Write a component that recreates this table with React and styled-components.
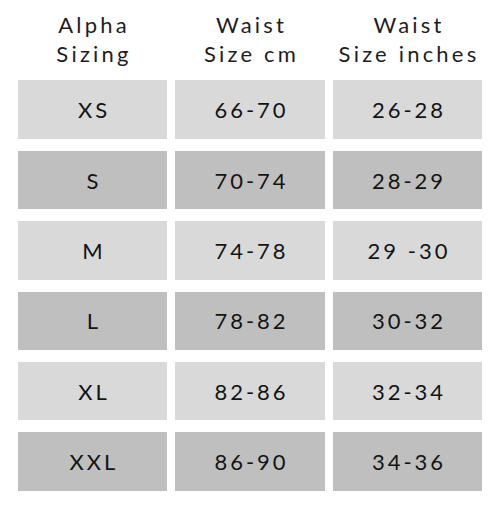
import React from "react";
import styled, { createGlobalStyle } from "styled-components";

const GlobalStyle = createGlobalStyle`
  body {
    margin: 0;
    background: #ffffff;
    font-family: Lato, "Open Sans", sans-serif;
  }
`;

const Table = styled.div`
  display: grid;
  grid-template-columns: 149px 150px 149px;
  grid-auto-rows: 58.5px;
  column-gap: 8px;
  row-gap: 11.9px;
  padding: 10px 18px 0;
`;

const Head = styled.div`
  display: flex;
  flex-direction: column;
  align-items: center;
  justify-content: center;
  padding-left: 3px;
  font-size: 22px;
  line-height: 29px;
  letter-spacing: 3.2px;
  color: #1e1e1e;
  white-space: nowrap;
`;

const Cell = styled.div`
  display: flex;
  align-items: center;
  justify-content: center;
  padding-left: 3px;
  background: ${(p) => (p.$dark ? "#bfbfbf" : "#d9d9d9")};
  font-size: 22px;
  letter-spacing: 3px;
  color: #141414;
`;

const headers = [
  ["Alpha", "Sizing"],
  ["Waist", "Size cm"],
  ["Waist", "Size inches"],
];

const rows = [
  ["XS", "66-70", "26-28"],
  ["S", "70-74", "28-29"],
  ["M", "74-78", "29 -30"],
  ["L", "78-82", "30-32"],
  ["XL", "82-86", "32-34"],
  ["XXL", "86-90", "34-36"],
];

export default function App() {
  return (
    <>
      <GlobalStyle />
      <Table>
        {headers.map((h, i) => (
          <Head key={i}>
            <span>{h[0]}</span>
            <span>{h[1]}</span>
          </Head>
        ))}
        {rows.map((r, i) =>
          r.map((c, j) => (
            <Cell key={i + "-" + j} $dark={i % 2 === 1}>
              {c}
            </Cell>
          ))
        )}
      </Table>
    </>
  );
}
